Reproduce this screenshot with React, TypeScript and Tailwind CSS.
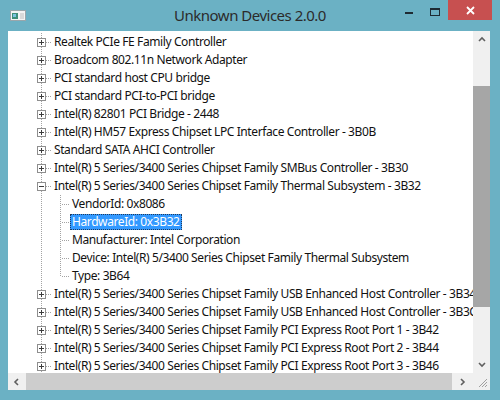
import React from 'react';

type Node = { label: string; open?: boolean; children?: string[] };

const devices: Node[] = [
  { label: 'Realtek PCIe FE Family Controller' },
  { label: 'Broadcom 802.11n Network Adapter' },
  { label: 'PCI standard host CPU bridge' },
  { label: 'PCI standard PCI-to-PCI bridge' },
  { label: 'Intel(R) 82801 PCI Bridge - 2448' },
  { label: 'Intel(R) HM57 Express Chipset LPC Interface Controller - 3B0B' },
  { label: 'Standard SATA AHCI Controller' },
  { label: 'Intel(R) 5 Series/3400 Series Chipset Family SMBus Controller - 3B30' },
  {
    label: 'Intel(R) 5 Series/3400 Series Chipset Family Thermal Subsystem - 3B32',
    open: true,
    children: [
      'VendorId: 0x8086',
      'HardwareId: 0x3B32',
      'Manufacturer: Intel Corporation',
      'Device: Intel(R) 5/3400 Series Chipset Family Thermal Subsystem',
      'Type: 3B64',
    ],
  },
  { label: 'Intel(R) 5 Series/3400 Series Chipset Family USB Enhanced Host Controller - 3B34' },
  { label: 'Intel(R) 5 Series/3400 Series Chipset Family USB Enhanced Host Controller - 3B3C' },
  { label: 'Intel(R) 5 Series/3400 Series Chipset Family PCI Express Root Port 1 - 3B42' },
  { label: 'Intel(R) 5 Series/3400 Series Chipset Family PCI Express Root Port 2 - 3B44' },
  { label: 'Intel(R) 5 Series/3400 Series Chipset Family PCI Express Root Port 3 - 3B46' },
];

const dot = '#a3a3a3';

function RootGuide({ open }: { open?: boolean }) {
  return (
    <svg width="45" height="18" className="shrink-0" shapeRendering="crispEdges">
      <line x1="33.5" y1="0" x2="33.5" y2="18" stroke={dot} strokeDasharray="1 1" />
      <line x1="38" y1="9.5" x2="44" y2="9.5" stroke={dot} strokeDasharray="1 1" />
      <rect x="29.5" y="5.5" width="8" height="8" fill="#fff" stroke="#8e8e8e" />
      <line x1="31" y1="9.5" x2="36" y2="9.5" stroke="#3c3c3c" />
      {!open && <line x1="33.5" y1="7" x2="33.5" y2="12" stroke="#3c3c3c" />}
    </svg>
  );
}

function ChildGuide({ last }: { last?: boolean }) {
  return (
    <svg width="62" height="18" className="shrink-0" shapeRendering="crispEdges">
      <line x1="33.5" y1="0" x2="33.5" y2="18" stroke={dot} strokeDasharray="1 1" />
      <line x1="52.5" y1="0" x2="52.5" y2={last ? 10 : 18} stroke={dot} strokeDasharray="1 1" />
      <line x1="54" y1="9.5" x2="62" y2="9.5" stroke={dot} strokeDasharray="1 1" />
    </svg>
  );
}

function Chevron({ dir }: { dir: 'up' | 'down' | 'left' | 'right' }) {
  const pts = {
    up: '1,5 4,2 7,5',
    down: '1,2 4,5 7,2',
    left: '5,1 2,4 5,7',
    right: '2,1 5,4 2,7',
  }[dir];
  return (
    <svg width="8" height="8" viewBox="0 0 8 8">
      <polyline points={pts} fill="none" stroke="#606060" strokeWidth="1.6" />
    </svg>
  );
}

export default function App() {
  return (
    <div
      className="flex h-[400px] w-[500px] flex-col overflow-hidden bg-[#6bb1c4]"
      style={{ fontFamily: '"Noto Sans", "Open Sans", sans-serif' }}
    >
      {/* title bar */}
      <div className="grid h-[31px] shrink-0 grid-cols-[1fr_auto_1fr]">
        <div className="pl-[10px] pt-[10px]">
          <svg width="16" height="11" viewBox="0 0 16 11" shapeRendering="crispEdges">
            <rect x="0.5" y="0.5" width="15" height="10" fill="#f4f4f4" stroke="#9aa6ab" />
            <rect x="2" y="3" width="6" height="6" fill="#3f8f7a" />
            <rect x="3" y="4" width="3" height="3" fill="#7cc3e0" />
            <rect x="10" y="3" width="4" height="6" fill="#d9d9d9" />
          </svg>
        </div>
        <div className="pt-[4px] text-[15px] leading-[22px] tracking-[-0.5px] text-[#2b2b2b]">
          Unknown Devices 2.0.0
        </div>
        <div className="flex items-start justify-end pr-[8px]">
          <div className="flex h-[20px] w-[26px] items-center justify-center pt-[5px]">
            <div className="h-[2px] w-[8px] bg-[#1e2b33]" />
          </div>
          <div className="flex h-[20px] w-[26px] items-center justify-center pt-[3px]">
            <div className="h-[8px] w-[10px] border border-t-2 border-[#1e2b33]" />
          </div>
          <div className="flex h-[20px] w-[44px] items-center justify-center bg-[#c75050]">
            <svg width="9" height="9" viewBox="0 0 9 9">
              <path d="M1 1L8 8M8 1L1 8" stroke="#fff" strokeWidth="1.8" />
            </svg>
          </div>
        </div>
      </div>

      {/* client area */}
      <div className="mb-[10px] ml-[8px] mr-[10px] flex min-h-0 flex-1 flex-col bg-white">
        <div className="flex min-h-0 flex-1">
          <div className="min-w-0 flex-1 overflow-hidden whitespace-nowrap pt-[2px] text-[12px] tracking-[-0.4px] text-[#111]">
            {devices.map((d) => (
              <React.Fragment key={d.label}>
                <div className="flex h-[18px] items-center">
                  <RootGuide open={d.open} />
                  <span className="pl-[1px]">{d.label}</span>
                </div>
                {d.children?.map((c, i) => (
                  <div key={c} className="flex h-[18px] items-center">
                    <ChildGuide last={i === d.children!.length - 1} />
                    {c.startsWith('HardwareId') ? (
                      <span className="flex h-[16px] items-center border border-dotted border-[#203a5c] bg-[#3399ff] px-[1px] text-white">
                        {c}
                      </span>
                    ) : (
                      <span className="px-[2px]">{c}</span>
                    )}
                  </div>
                ))}
              </React.Fragment>
            ))}
          </div>
          {/* vertical scrollbar */}
          <div className="flex w-[17px] shrink-0 flex-col bg-[#f0f0f0]">
            <div className="flex h-[17px] items-center justify-center">
              <Chevron dir="up" />
            </div>
            <div className="h-[38px]" />
            <div className="h-[221px] bg-[#a6a6a6]" />
            <div className="flex-1" />
            <div className="flex h-[17px] items-center justify-center">
              <Chevron dir="down" />
            </div>
          </div>
        </div>
        {/* horizontal scrollbar */}
        <div className="flex h-[17px] shrink-0">
          <div className="flex min-w-0 flex-1 bg-[#f0f0f0]">
            <div className="flex w-[18px] items-center justify-center">
              <Chevron dir="left" />
            </div>
            <div className="flex-1 bg-[#cdcdcd]" />
            <div className="flex w-[21px] items-center justify-center">
              <Chevron dir="right" />
            </div>
          </div>
          <div className="flex w-[17px] items-end justify-end bg-[#f0f0f0] p-[2px]">
            <svg width="11" height="11" viewBox="0 0 11 11">
              <path d="M10 2L2 10M10 5L5 10M10 8L8 10" stroke="#a0a0a0" strokeWidth="1" />
            </svg>
          </div>
        </div>
      </div>
    </div>
  );
}
